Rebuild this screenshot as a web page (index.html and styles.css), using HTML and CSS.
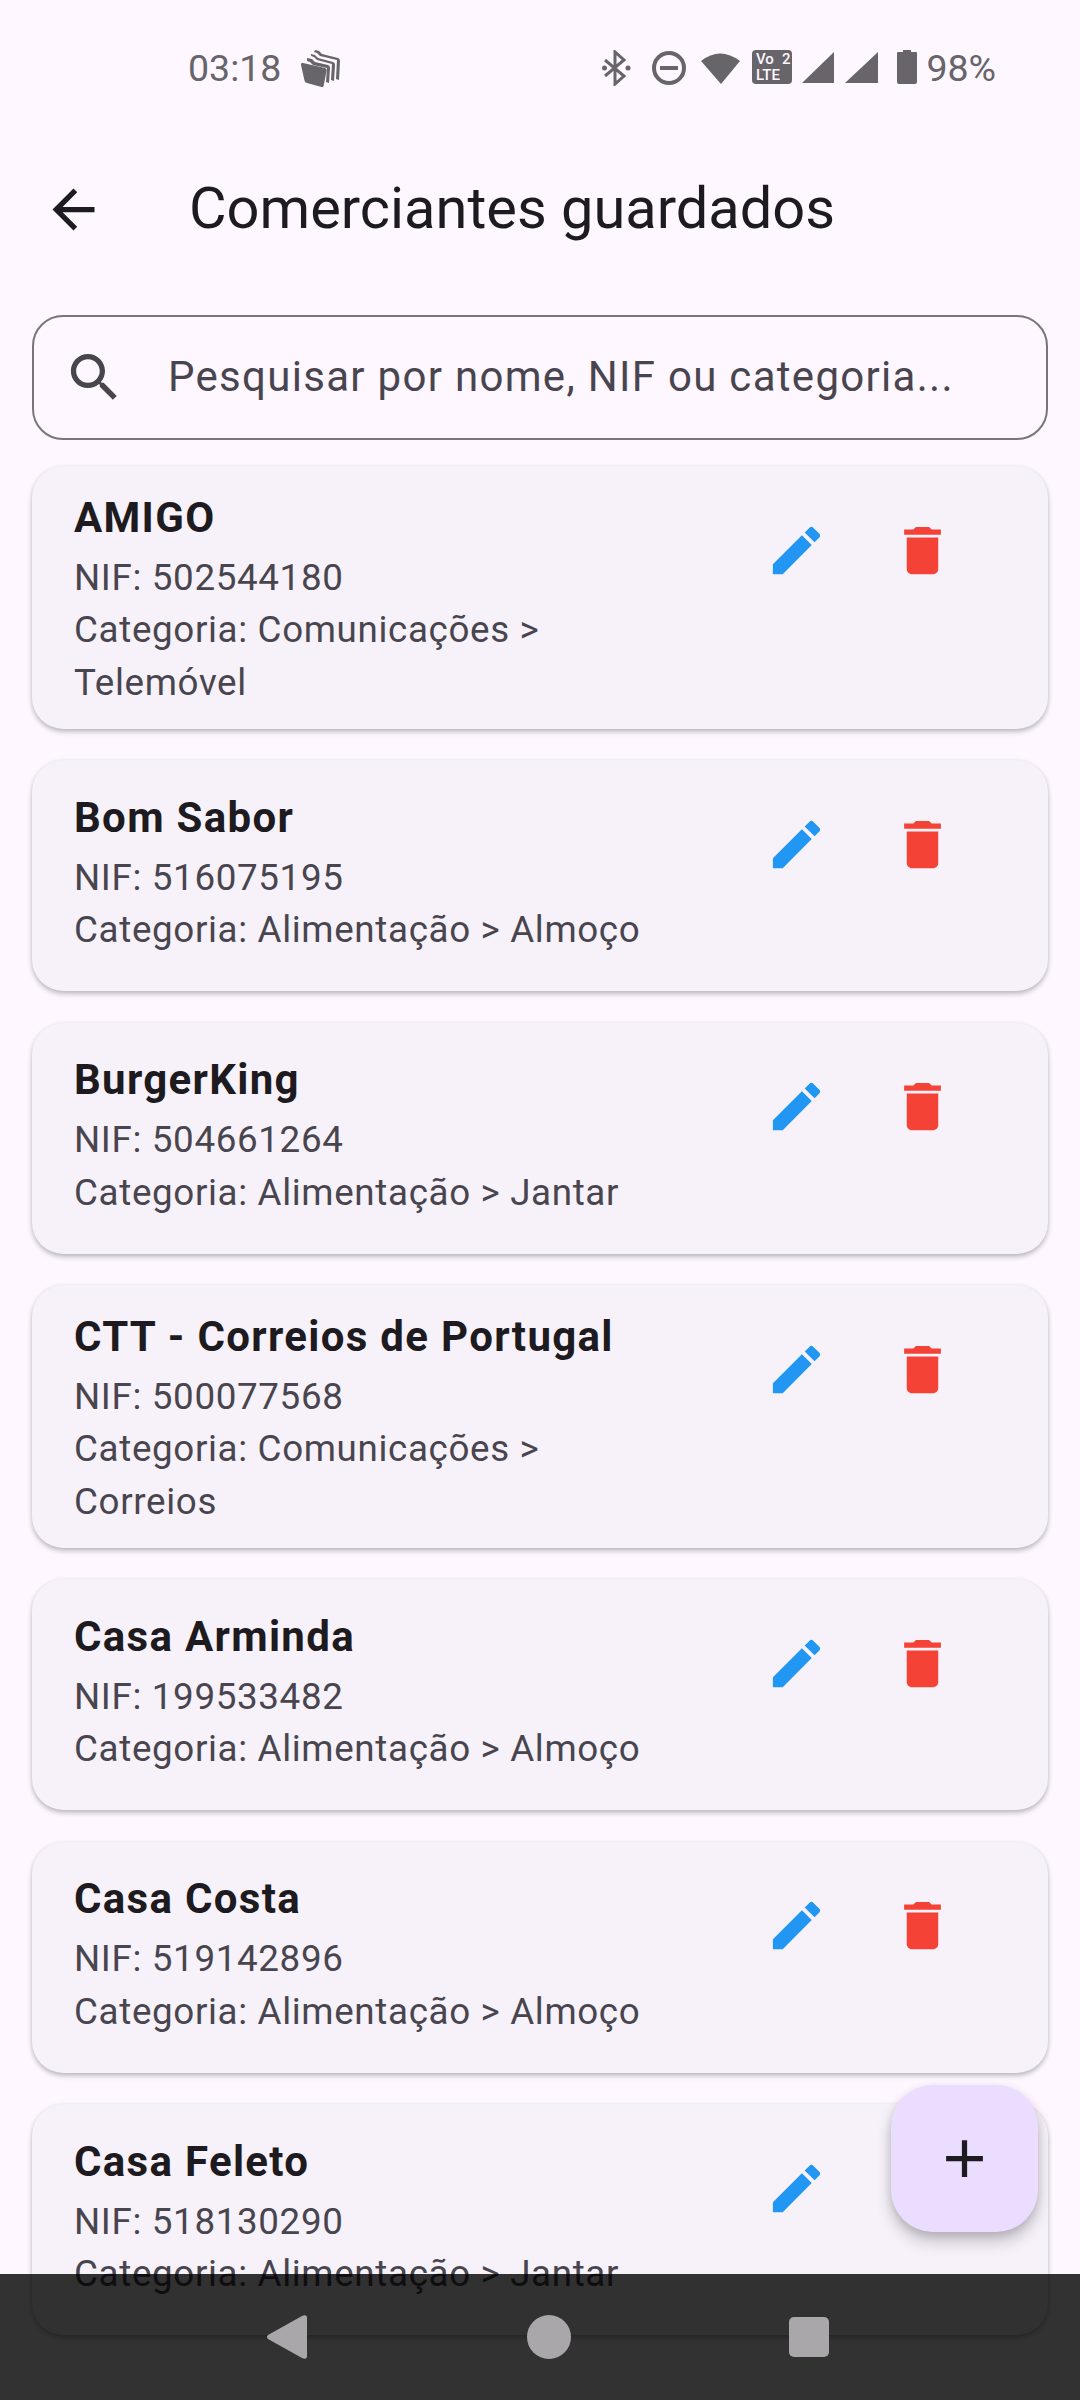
FILE: index.html
```html
<!DOCTYPE html>
<html lang="pt">
<head>
    <meta charset="UTF-8">
    <meta name="viewport" content="width=device-width, initial-scale=1.0">
    <title>Comerciantes guardados</title>
    <link rel="stylesheet" href="styles.css">
</head>
<body>

<div class="app">
    <!-- Status bar -->
    <div class="status-bar">
        <span class="status-time">03:18</span>
        <svg class="status-folder" width="40" height="40" viewBox="0 0 40 40">
            <path d="M14 2l4 1 3 3 16 4q2 .5 2 3l-1 19-3-1 1-19-17-4-3-3-3-1z" />
            <path d="M10 6l4 1 3 3 15 4q2 .5 2 3l-1 16-3-1 1-16-15-4-3-3-3-1z" />
            <path d="M6 10l5 1 3 3 13 3q2 .5 2 3l-1 15-3-1 1-14-14-3-3-3-3-1z" />
            <path d="M2 15l22 5q2 .5 1.600 2.500l-3 15.500q-.5 1.500-2 1L6 35q-2-.5-2.400-2L0 17q-.5-2.500 2-2z" />
        </svg>
        <div class="status-spacer"></div>
        <svg class="status-icons" width="316" height="36" viewBox="0 0 316 36">
            <path class="stroke thin" d="M3 10l19 16-9 8V2l9 8L3 26" />
            <circle cx="2.500" cy="18" r="2.500" />
            <circle cx="26" cy="18" r="2.500" />
            <circle class="stroke" cx="67" cy="18" r="15" />
            <rect x="58" y="16" width="18" height="4" />
            <path d="M99 11q19-15 39 0L119 34z" />
            <rect x="150" y="0" width="40" height="34" rx="4" />
            <text class="volte" x="154" y="14">Vo</text>
            <text class="volte" x="180" y="14">2</text>
            <text class="volte" x="154" y="30">LTE</text>
            <path d="M200 33L232 2v31z" />
            <path d="M243 33L276 2v31z" />
            <path d="M295 3q0-1 1-1h5V0h8v2h5q1 0 1 1v29q0 2-2 2h-16q-2 0-2-2z" />
        </svg>
        <span class="status-battery">98%</span>
    </div>

    <!-- App bar -->
    <header class="app-bar">
        <svg class="icon back-icon" viewBox="0 0 24 24"><path d="M20 11H7.830l5.590-5.590L12 4l-8 8 8 8 1.410-1.410L7.830 13H20v-2z"/></svg>
        <h1 class="app-title">Comerciantes guardados</h1>
    </header>

    <!-- Search -->
    <div class="search-box">
        <svg class="icon search-icon" viewBox="0 0 24 24"><path d="M15.500 14h-.79l-.28-.27C15.410 12.590 16 11.110 16 9.500 16 5.910 13.090 3 9.500 3S3 5.910 3 9.500 5.910 16 9.500 16c1.610 0 3.090-.59 4.230-1.570l.27.28v.79l5 4.990L20.490 19l-4.990-5zm-6 0C7.010 14 5 11.990 5 9.500S7.010 5 9.500 5 14 7.010 14 9.500 11.990 14 9.500 14z"/></svg>
        <span class="search-placeholder">Pesquisar por nome, NIF ou categoria...</span>
    </div>

    <!-- List -->
    <div class="merchant-list">
        <div class="card">
            <div class="card-text">
                <div class="card-name">AMIGO</div>
                <div class="card-line">NIF: 502544180</div>
                <div class="card-line">Categoria: Comunicações &gt; Telemóvel</div>
            </div>
            <div class="card-actions">
                <svg class="icon edit-icon" viewBox="0 0 24 24"><path d="M3 17.250V21h3.750L17.810 9.940l-3.750-3.750L3 17.250zM20.710 7.040c.39-.39.39-1.020 0-1.410l-2.340-2.340c-.39-.39-1.020-.39-1.410 0l-1.830 1.830 3.750 3.750 1.830-1.830z"/></svg>
                <svg class="icon delete-icon" viewBox="0 0 24 24"><path d="M6 19c0 1.100.9 2 2 2h8c1.100 0 2-.9 2-2V7H6v12zM19 4h-3.500l-1-1h-5l-1 1H5v2h14V4z"/></svg>
            </div>
        </div>

        <div class="card">
            <div class="card-text">
                <div class="card-name">Bom Sabor</div>
                <div class="card-line">NIF: 516075195</div>
                <div class="card-line">Categoria: Alimentação &gt; Almoço</div>
            </div>
            <div class="card-actions">
                <svg class="icon edit-icon" viewBox="0 0 24 24"><path d="M3 17.250V21h3.750L17.810 9.940l-3.750-3.750L3 17.250zM20.710 7.040c.39-.39.39-1.020 0-1.410l-2.340-2.340c-.39-.39-1.020-.39-1.410 0l-1.830 1.830 3.750 3.750 1.830-1.830z"/></svg>
                <svg class="icon delete-icon" viewBox="0 0 24 24"><path d="M6 19c0 1.100.9 2 2 2h8c1.100 0 2-.9 2-2V7H6v12zM19 4h-3.500l-1-1h-5l-1 1H5v2h14V4z"/></svg>
            </div>
        </div>

        <div class="card">
            <div class="card-text">
                <div class="card-name">BurgerKing</div>
                <div class="card-line">NIF: 504661264</div>
                <div class="card-line">Categoria: Alimentação &gt; Jantar</div>
            </div>
            <div class="card-actions">
                <svg class="icon edit-icon" viewBox="0 0 24 24"><path d="M3 17.250V21h3.750L17.810 9.940l-3.750-3.750L3 17.250zM20.710 7.040c.39-.39.39-1.020 0-1.410l-2.340-2.340c-.39-.39-1.020-.39-1.410 0l-1.830 1.830 3.750 3.750 1.830-1.830z"/></svg>
                <svg class="icon delete-icon" viewBox="0 0 24 24"><path d="M6 19c0 1.100.9 2 2 2h8c1.100 0 2-.9 2-2V7H6v12zM19 4h-3.500l-1-1h-5l-1 1H5v2h14V4z"/></svg>
            </div>
        </div>

        <div class="card">
            <div class="card-text">
                <div class="card-name">CTT - Correios de Portugal</div>
                <div class="card-line">NIF: 500077568</div>
                <div class="card-line">Categoria: Comunicações &gt; Correios</div>
            </div>
            <div class="card-actions">
                <svg class="icon edit-icon" viewBox="0 0 24 24"><path d="M3 17.250V21h3.750L17.810 9.940l-3.750-3.750L3 17.250zM20.710 7.040c.39-.39.39-1.020 0-1.410l-2.340-2.340c-.39-.39-1.020-.39-1.410 0l-1.830 1.830 3.750 3.750 1.830-1.830z"/></svg>
                <svg class="icon delete-icon" viewBox="0 0 24 24"><path d="M6 19c0 1.100.9 2 2 2h8c1.100 0 2-.9 2-2V7H6v12zM19 4h-3.500l-1-1h-5l-1 1H5v2h14V4z"/></svg>
            </div>
        </div>

        <div class="card">
            <div class="card-text">
                <div class="card-name">Casa Arminda</div>
                <div class="card-line">NIF: 199533482</div>
                <div class="card-line">Categoria: Alimentação &gt; Almoço</div>
            </div>
            <div class="card-actions">
                <svg class="icon edit-icon" viewBox="0 0 24 24"><path d="M3 17.250V21h3.750L17.810 9.940l-3.750-3.750L3 17.250zM20.710 7.040c.39-.39.39-1.020 0-1.410l-2.340-2.340c-.39-.39-1.020-.39-1.410 0l-1.830 1.830 3.750 3.750 1.830-1.830z"/></svg>
                <svg class="icon delete-icon" viewBox="0 0 24 24"><path d="M6 19c0 1.100.9 2 2 2h8c1.100 0 2-.9 2-2V7H6v12zM19 4h-3.500l-1-1h-5l-1 1H5v2h14V4z"/></svg>
            </div>
        </div>

        <div class="card">
            <div class="card-text">
                <div class="card-name">Casa Costa</div>
                <div class="card-line">NIF: 519142896</div>
                <div class="card-line">Categoria: Alimentação &gt; Almoço</div>
            </div>
            <div class="card-actions">
                <svg class="icon edit-icon" viewBox="0 0 24 24"><path d="M3 17.250V21h3.750L17.810 9.940l-3.750-3.750L3 17.250zM20.710 7.040c.39-.39.39-1.020 0-1.410l-2.340-2.340c-.39-.39-1.020-.39-1.410 0l-1.830 1.830 3.750 3.750 1.830-1.830z"/></svg>
                <svg class="icon delete-icon" viewBox="0 0 24 24"><path d="M6 19c0 1.100.9 2 2 2h8c1.100 0 2-.9 2-2V7H6v12zM19 4h-3.500l-1-1h-5l-1 1H5v2h14V4z"/></svg>
            </div>
        </div>

        <div class="card">
            <div class="card-text">
                <div class="card-name">Casa Feleto</div>
                <div class="card-line">NIF: 518130290</div>
                <div class="card-line">Categoria: Alimentação &gt; Jantar</div>
            </div>
            <div class="card-actions">
                <svg class="icon edit-icon" viewBox="0 0 24 24"><path d="M3 17.250V21h3.750L17.810 9.940l-3.750-3.750L3 17.250zM20.710 7.040c.39-.39.39-1.020 0-1.410l-2.340-2.340c-.39-.39-1.020-.39-1.410 0l-1.830 1.830 3.750 3.750 1.830-1.830z"/></svg>
                <svg class="icon delete-icon" viewBox="0 0 24 24"><path d="M6 19c0 1.100.9 2 2 2h8c1.100 0 2-.9 2-2V7H6v12zM19 4h-3.500l-1-1h-5l-1 1H5v2h14V4z"/></svg>
            </div>
        </div>
    </div>

    <!-- Floating button -->
    <div class="fab">
        <svg class="icon add-icon" viewBox="0 0 24 24"><path d="M19 13h-6v6h-2v-6H5v-2h6V5h2v6h6v2z"/></svg>
    </div>

    <!-- Navigation bar -->
    <div class="nav-bar">
        <svg class="nav-back" width="40" height="44" viewBox="0 0 40 44"><path d="M1 24q-2-2 0-4L35 1q5-2 5 2v38q0 4-5 2z"/></svg>
        <div class="nav-home"></div>
        <div class="nav-recent"></div>
    </div>
</div>

</body>
</html>
```

FILE: styles.css
```css
body {
    font-family: 'Roboto', sans-serif;
    background-color: #fef7ff;
    margin: 0;
    padding: 0;
}

.app {
    position: relative;
    width: 1080px;
    height: 2400px;
    overflow: hidden;
    background-color: #fef7ff;
}

.icon {
    display: block;
    width: 63px;
    height: 63px;
    flex: none;
}

/* Status bar */
.status-bar {
    display: flex;
    align-items: center;
    height: 136px;
    box-sizing: border-box;
    padding: 0 84px 0 188px;
    color: #67646a;
    font-size: 37.5px;
}

.status-folder {
    margin-left: 20px;
    fill: #67646a;
}

.status-spacer {
    flex: 1;
}

.status-icons {
    fill: #67646a;
    margin-right: 8px;
}

.status-icons .stroke {
    fill: none;
    stroke: #67646a;
    stroke-width: 4px;
}

.status-icons .thin {
    stroke-width: 3px;
}

.status-icons .volte {
    fill: #fef7ff;
    font-size: 15px;
    font-weight: 500;
}

/* App bar */
.app-bar {
    display: flex;
    align-items: center;
    height: 147px;
    padding-left: 42px;
}

.back-icon {
    fill: #1d1b20;
}

.app-title {
    margin: 0 0 3px 84px;
    font-size: 57.75px;
    font-weight: 400;
    color: #1d1b20;
}

/* Search */
.search-box {
    display: flex;
    align-items: center;
    height: 125px;
    box-sizing: border-box;
    margin: 32px 32px 0;
    padding-left: 29px;
    border: 2.6px solid #79747e;
    border-radius: 31px;
}

.search-icon {
    fill: #49454f;
}

.search-placeholder {
    margin: 0 0 2px 42px;
    font-size: 42px;
    letter-spacing: 1.3px;
    color: #49454f;
}

/* List */
.merchant-list {
    display: flex;
    flex-direction: column;
    gap: 31.5px;
    padding: 26px 32px 0;
}

.card {
    display: flex;
    justify-content: space-between;
    align-items: flex-start;
    min-height: 231px;
    box-sizing: border-box;
    padding: 22.5px 63px 19.5px 42px;
    background-color: #f7f2fa;
    border-radius: 31.5px;
    box-shadow: 0 3px 5px rgba(0, 0, 0, 0.24), 0 0 4px rgba(0, 0, 0, 0.06);
}

/* short entries sit a little lower, long ones fill the card */
.card-text {
    display: flex;
    flex-direction: column;
    justify-content: center;
    width: 600px;
    min-height: 180px;
}

.card-name {
    margin-bottom: 5px;
    font-size: 42px;
    font-weight: 700;
    line-height: 58px;
    color: #1d1b20;
    letter-spacing: 1.31px;
}

.card-line {
    font-size: 36.75px;
    line-height: 52.5px;
    letter-spacing: 0.65px;
    color: #49454f;
}

.card-actions {
    display: flex;
    align-items: flex-start;
    gap: 63px;
    padding: 30px 31.5px 0;
}

.edit-icon {
    fill: #2196f3;
}

.delete-icon {
    fill: #f44336;
}

/* Floating button */
.fab {
    position: absolute;
    left: 891px;
    top: 2085px;
    display: flex;
    align-items: center;
    justify-content: center;
    width: 147px;
    height: 147px;
    background-color: #eaddff;
    border-radius: 42px;
    box-shadow: 0 10px 16px rgba(0, 0, 0, 0.2), 0 3px 8px rgba(0, 0, 0, 0.12);
}

.add-icon {
    fill: #1d1b20;
}

/* Navigation bar */
.nav-bar {
    position: absolute;
    left: 0;
    right: 0;
    bottom: 0;
    display: flex;
    align-items: center;
    height: 126px;
    background-color: rgba(0, 0, 0, 0.8);
    padding-left: 267px;
    box-sizing: border-box;
}

.nav-back {
    fill: #aaa7ab;
}

.nav-home {
    width: 44px;
    height: 44px;
    margin-left: 220px;
    border-radius: 50%;
    background-color: #aaa7ab;
}

.nav-recent {
    width: 40px;
    height: 40px;
    margin-left: 218px;
    border-radius: 5px;
    background-color: #aaa7ab;
}
```
